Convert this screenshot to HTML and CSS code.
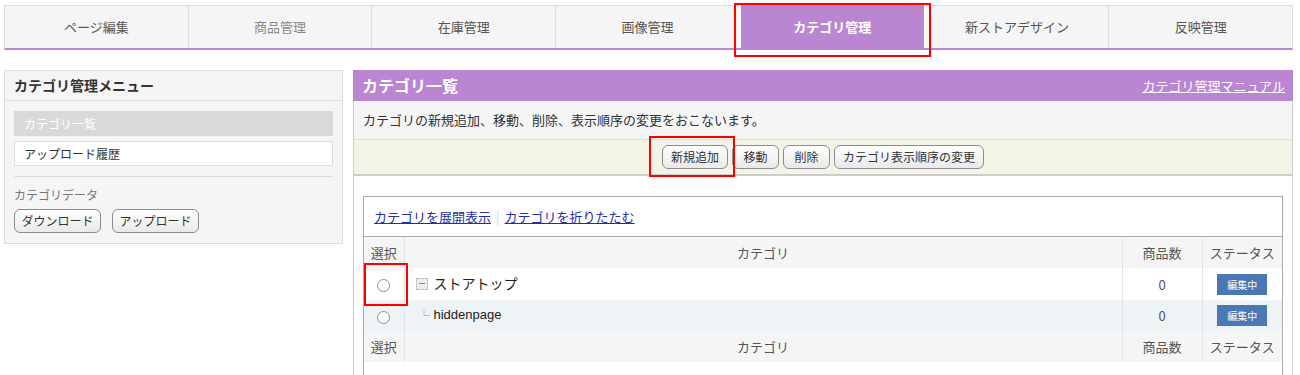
FILE: index.html
```html
<!DOCTYPE html>
<html lang="ja">
<head>
<meta charset="utf-8">
<title>カテゴリ管理</title>
<link rel="stylesheet" href="styles.css">
</head>
<body>
<div class="page">
  <nav class="tabs">
    <a class="tab">ページ編集</a>
    <a class="tab tab-disabled">商品管理</a>
    <a class="tab">在庫管理</a>
    <a class="tab">画像管理</a>
    <a class="tab tab-active mark mark-tab">カテゴリ管理</a>
    <a class="tab tab-after">新ストアデザイン</a>
    <a class="tab">反映管理</a>
  </nav>

  <div class="layout">
    <aside class="side">
      <div class="side-head">カテゴリ管理メニュー</div>
      <div class="side-body">
        <div class="side-item side-item-current">カテゴリ一覧</div>
        <div class="side-item">アップロード履歴</div>
        <div class="side-sep"></div>
        <div class="side-label">カテゴリデータ</div>
        <div class="side-btns">
          <button class="btn btn-side">ダウンロード</button>
          <button class="btn btn-side">アップロード</button>
        </div>
      </div>
    </aside>

    <main class="main">
      <div class="main-head">
        <h1 class="main-title">カテゴリ一覧</h1>
        <a class="main-link">カテゴリ管理マニュアル</a>
      </div>
      <div class="desc">カテゴリの新規追加、移動、削除、表示順序の変更をおこないます。</div>
      <div class="btnbar">
        <button class="btn mark mark-btn">新規追加</button>
        <button class="btn">移動</button>
        <button class="btn">削除</button>
        <button class="btn">カテゴリ表示順序の変更</button>
      </div>
      <div class="content">
        <div class="box">
          <div class="box-links">
            <a class="tlink">カテゴリを展開表示</a><span class="tsep">|</span><a class="tlink">カテゴリを折りたたむ</a>
          </div>
          <table class="ctable">
            <colgroup>
              <col class="c-sel">
              <col class="c-cat">
              <col class="c-num">
              <col class="c-st">
            </colgroup>
            <tr class="hrow">
              <th>選択</th><th>カテゴリ</th><th>商品数</th><th>ステータス</th>
            </tr>
            <tr class="row row-1">
              <td class="sel mark mark-radio"><span class="radio"></span></td>
              <td class="cat"><div class="cat-inner cat-inner-top"><span class="tree-minus"></span><span class="cat-top">ストアトップ</span></div></td>
              <td class="num">0</td>
              <td class="st"><span class="badge">編集中</span></td>
            </tr>
            <tr class="row row-2">
              <td class="sel"><span class="radio"></span></td>
              <td class="cat"><div class="cat-inner cat-inner-child"><span class="tree-branch">└</span><span class="cat-child">hiddenpage</span></div></td>
              <td class="num">0</td>
              <td class="st"><span class="badge">編集中</span></td>
            </tr>
            <tr class="hrow">
              <th>選択</th><th>カテゴリ</th><th>商品数</th><th>ステータス</th>
            </tr>
          </table>
          <div class="box-tail"></div>
        </div>
      </div>
    </main>
  </div>
</div>
</body>
</html>
```

FILE: styles.css
```css
* { box-sizing: border-box; }

html, body {
  margin: 0;
  padding: 0;
  background: #fff;
}

body {
  font-family: "Liberation Sans", "Noto Sans CJK JP", sans-serif;
  color: #333;
  font-size: 13px;
}

.page {
  padding: 5px 7px 0 4px;
}

/* ---------- tabs ---------- */
.tabs {
  display: flex;
  height: 45px;
  border: 1px solid #ddd;
  border-bottom: 2px solid #bb86d1;
  background: #f5f5f5;
}

.tab {
  flex: 1 1 0;
  text-align: center;
  line-height: 42px;
  font-size: 13px;
  color: #555;
  font-family: "Noto Sans CJK JP", sans-serif;
}

.tab + .tab {
  border-left: 1px solid #ddd;
}

.tab-disabled {
  color: #8a8a8a;
}

.tab.tab-active {
  background: #bb86d1;
  color: #fff;
  font-weight: bold;
  border-left: 2px solid #fff;
  border-right: 2px solid #fff;
  margin-top: -1px;
  line-height: 44px;
}

.tab.tab-after {
  border-left: 0;
}

/* ---------- annotation marks ---------- */
.mark { position: relative; }

.mark::after {
  content: "";
  position: absolute;
  border: 2px solid #f00;
  pointer-events: none;
}

.mark-tab::after {
  top: -2px;
  left: -7px;
  right: -7px;
  bottom: -9px;
}

.mark-btn::after {
  top: -10px;
  left: -14px;
  right: -8px;
  bottom: -9px;
}

.mark-radio::after {
  top: -5px;
  left: 0;
  right: -4px;
  bottom: -6px;
}

/* ---------- layout ---------- */
.layout {
  display: flex;
  align-items: flex-start;
  gap: 10px;
  margin-top: 20px;
}

/* ---------- side ---------- */
.side {
  width: 339px;
  flex: 0 0 339px;
  background: #f5f5f5;
  border: 1px solid #ddd;
  font-family: "Noto Sans CJK JP", sans-serif;
}

.side-head {
  height: 30px;
  line-height: 29px;
  padding: 0 9px;
  border-bottom: 1px solid #ddd;
  font-size: 14px;
  font-weight: bold;
  color: #333;
}

.side-body {
  padding: 10px 9px 10px;
}

.side-item {
  height: 25px;
  line-height: 23px;
  padding: 0 9px;
  font-size: 12px;
  background: #fff;
  border: 1px solid #ddd;
  color: #333;
}

.side-item + .side-item {
  margin-top: 5px;
}

.side-item-current {
  background: #d9d9d9;
  border-color: #d9d9d9;
  color: #fff;
}

.side-sep {
  height: 1px;
  background: #ddd;
  margin: 10px 0 0;
}

.side-label {
  margin-top: 9px;
  line-height: 18px;
  font-size: 12px;
  color: #777;
}

.side-btns {
  display: flex;
  gap: 11px;
  margin-top: 5px;
}

/* ---------- buttons ---------- */
.btn {
  height: 24px;
  min-width: 47px;
  padding: 0 8px;
  border: 1px solid #8c8c8c;
  border-radius: 6px;
  background: linear-gradient(#ffffff, #e9e9e9);
  font-family: "Noto Sans CJK JP", sans-serif;
  font-size: 12px;
  line-height: 22px;
  color: #333;
}

.btn-side {
  width: 87px;
  padding: 0;
}

/* ---------- main ---------- */
.main {
  flex: 1 1 auto;
  border: 1px solid #ccc;
  border-top: 0;
  font-family: "Noto Sans CJK JP", sans-serif;
}

.main-head {
  display: flex;
  align-items: center;
  justify-content: space-between;
  height: 31px;
  padding: 0 8px 0 9px;
  margin: 0 -1px;
  background: #bb86d1;
}

.main-title {
  margin: 0;
  font-size: 16px;
  font-weight: bold;
  color: #fff;
  line-height: 31px;
}

.main-link {
  font-size: 13px;
  color: #fff;
  text-decoration: underline;
  line-height: 31px;
}

.desc {
  height: 39px;
  line-height: 38px;
  padding: 0 9px;
  background: #f5f5f5;
  border-bottom: 1px solid #ddd;
  font-size: 13px;
  color: #333;
}

.btnbar {
  display: flex;
  justify-content: center;
  gap: 4px;
  padding: 5px 0;
  background: #f3f3e6;
  border-bottom: 2px solid #ccc;
}

.content {
  padding: 20px 9px 0;
}

.box {
  border: 1px solid #aaa;
  border-bottom: 0;
}

.box-links {
  height: 40px;
  line-height: 39px;
  padding: 0 10px;
  border-bottom: 1px solid #aaa;
  font-size: 13px;
}

.tlink {
  color: #1f2fa8;
  text-decoration: underline;
}

.tsep {
  color: #c9dbc4;
  margin: 0 5px;
}

/* ---------- table ---------- */
.ctable {
  width: 100%;
  border-collapse: collapse;
  table-layout: fixed;
}

.c-sel { width: 40px; }
.c-num { width: 80px; }
.c-st { width: 80px; }

.ctable th,
.ctable td {
  padding: 0;
  height: 31px;
  font-size: 13px;
  text-align: center;
  vertical-align: middle;
}

.ctable th + th,
.ctable td + td {
  border-left: 1px solid #e4e4e4;
}

.hrow th {
  background: #f5f5f5;
  font-weight: normal;
  color: #555;
}

.hrow th:first-child {
  padding-bottom: 1px;
}

.row-1 td {
  background: #fff;
  height: 32px;
}

.row-2 td {
  background: #eef3f6;
}

.ctable td.cat {
  text-align: left;
  padding-left: 11px;
}

.cat-inner {
  display: flex;
  align-items: center;
}

.cat-inner-top {
  padding-bottom: 3px;
}

.cat-inner-child {
  padding-bottom: 2px;
}

.radio {
  display: inline-block;
  width: 13px;
  height: 13px;
  border: 1px solid #8f8f8f;
  border-radius: 50%;
  background: #fff;
  vertical-align: middle;
}

.tree-minus {
  display: inline-block;
  position: relative;
  width: 12px;
  height: 12px;
  flex: 0 0 12px;
  border: 1px solid #c4c4c4;
  background: #eee;
  margin-right: 6px;
  margin-top: 3px;
}

.tree-minus::before {
  content: "";
  position: absolute;
  left: 2px;
  right: 2px;
  top: 4px;
  height: 1px;
  background: #888;
}

.cat-top {
  font-size: 14px;
  line-height: 20px;
  color: #222;
}

.tree-branch {
  display: inline-block;
  width: 18px;
  padding-left: 3px;
  font-size: 11px;
  line-height: 16px;
  color: #999;
}

.cat-child {
  font-family: "Liberation Sans", sans-serif;
  font-size: 13px;
  line-height: 18px;
  color: #222;
}

.num {
  color: #555;
}

.badge {
  display: inline-block;
  width: 50px;
  height: 21px;
  line-height: 21px;
  background: #4a78b5;
  color: #fff;
  font-size: 10px;
  text-align: center;
  vertical-align: middle;
}

.box-tail {
  height: 40px;
}
```
